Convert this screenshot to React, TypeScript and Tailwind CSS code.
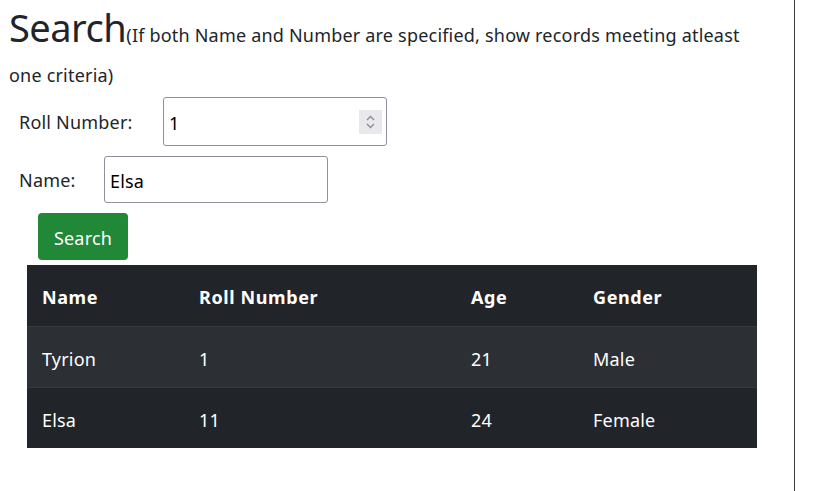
import React from "react";

const rows = [
  { name: "Tyrion", roll: "1", age: "21", gender: "Male" },
  { name: "Elsa", roll: "11", age: "24", gender: "Female" },
];

export default function App() {
  return (
    <div
      className="w-[837px] h-[491px] bg-white text-[#212529] overflow-hidden flex"
      style={{ fontFamily: '"Noto Sans", "Open Sans", sans-serif' }}
    >
      <div className="w-[795px] h-[491px] border-r border-[#343a40] pl-[9px] pr-[40px]">
        <div className="pt-[7px] text-[18px] leading-[40px] tracking-[0.2px]">
          <span className="text-[38px] leading-[40px] tracking-[-0.5px]">Search</span>
          <span>(If both Name and Number are specified, show records meeting atleast one criteria)</span>
        </div>
        <div className="pl-[10px] mt-[2px] flex items-center text-[18px] h-[49px] tracking-[0.2px]">
          <label className="w-[144px] pt-[2px]">Roll Number:</label>
          <div className="relative">
            <input
              type="text"
              defaultValue="1"
              className="w-[224px] h-[49px] border border-[#8f8f9d] rounded-[3px] pl-[5px] pt-[2px] text-[18px] text-black outline-none"
            />
            <div className="absolute right-[5px] top-[13px] w-[23px] h-[24px] bg-[#e9e9ed] flex flex-col items-center justify-center gap-[2px]">
              <svg width="9" height="6" viewBox="0 0 9 6"><path d="M1 5 L4.5 1.5 L8 5" stroke="#8a8a8f" strokeWidth="1.3" fill="none" /></svg>
              <svg width="9" height="6" viewBox="0 0 9 6"><path d="M1 1 L4.5 4.5 L8 1" stroke="#8a8a8f" strokeWidth="1.3" fill="none" /></svg>
            </div>
          </div>
        </div>
        <div className="pl-[10px] mt-[10px] flex items-center text-[18px] h-[47px] tracking-[0.2px]">
          <label className="w-[85px] pt-[2px]">Name:</label>
          <input
            type="text"
            defaultValue="Elsa"
            className="w-[224px] h-[47px] border border-[#8f8f9d] rounded-[3px] pl-[5px] pt-[2px] text-[18px] text-black outline-none"
          />
        </div>
        <div className="pl-[29px] mt-[10px]">
          <button className="w-[90px] h-[47px] bg-[#218838] rounded-[4px] text-white text-[18px] tracking-[0.2px] pt-[3px]">
            Search
          </button>
        </div>
        <div className="pl-[18px] mt-[5px]">
          <table className="w-[730px] bg-[#212529] text-white text-[18px] border-collapse">
            <thead>
              <tr className="h-[61px] border-b border-[#373b3e]">
                <th className="text-left font-bold pl-[15px] pt-[5px] w-[157px] tracking-[0.6px]">Name</th>
                <th className="text-left font-bold pl-[15px] pt-[5px] w-[272px] tracking-[0.6px]">Roll Number</th>
                <th className="text-left font-bold pl-[15px] pt-[5px] w-[122px] tracking-[0.6px]">Age</th>
                <th className="text-left font-bold pl-[15px] pt-[5px] tracking-[0.6px]">Gender</th>
              </tr>
            </thead>
            <tbody>
              {rows.map((r, i) => (
                <tr
                  key={r.name}
                  className={
                    i === 0
                      ? "h-[61px] bg-[#2c3034] border-b border-[#373b3e]"
                      : "h-[61px] bg-[#212529]"
                  }
                >
                  <td className="pl-[15px] pt-[6px] tracking-[0.2px]">{r.name}</td>
                  <td className="pl-[15px] pt-[6px] tracking-[0.2px]">{r.roll}</td>
                  <td className="pl-[15px] pt-[6px] tracking-[0.2px]">{r.age}</td>
                  <td className="pl-[15px] pt-[6px] tracking-[0.2px]">{r.gender}</td>
                </tr>
              ))}
            </tbody>
          </table>
        </div>
      </div>
    </div>
  );
}
